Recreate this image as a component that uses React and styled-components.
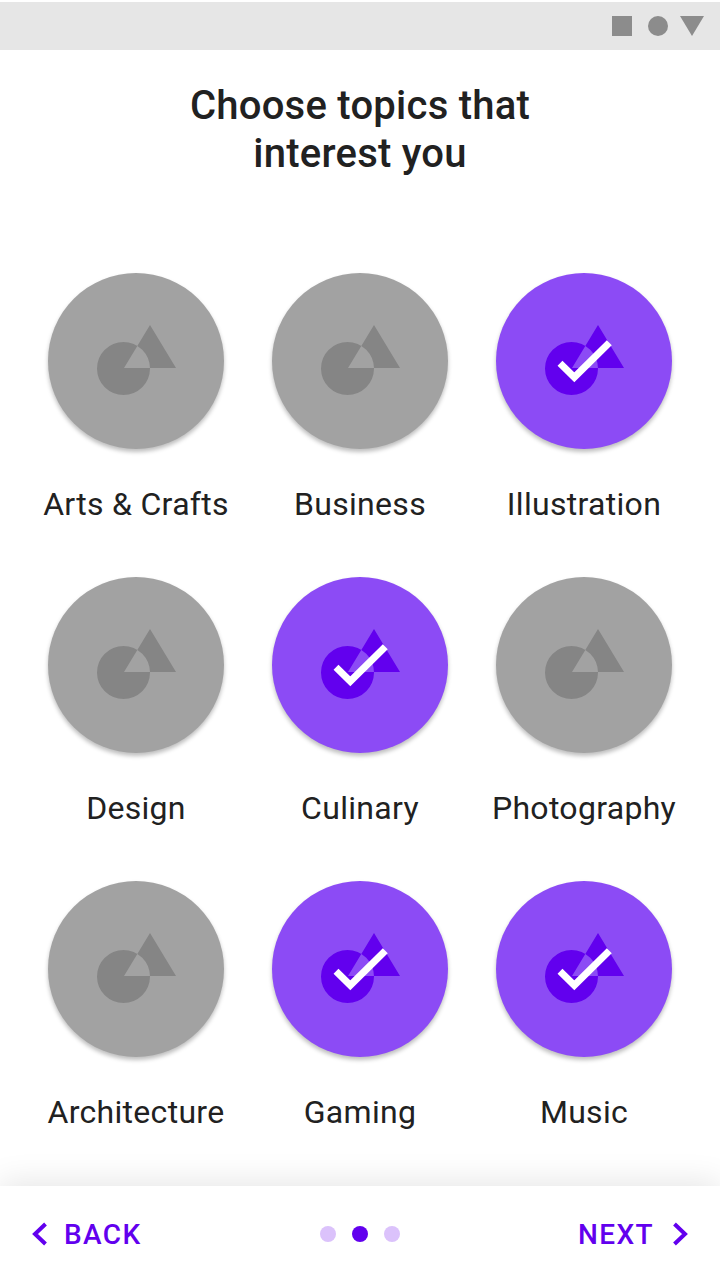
import React from 'react';
import styled, { createGlobalStyle } from 'styled-components';

const GlobalStyle = createGlobalStyle`
  html, body {
    margin: 0;
    padding: 0;
    background: #fff;
  }
  * {
    box-sizing: border-box;
  }
`

const Page = styled.div`
  display: flex;
  flex-direction: column;
  width: 720px;
  height: 1280px;
  padding-top: 2px;
  overflow: hidden;
  font-family: Roboto, sans-serif;
  background: #fff;
`

const StatusBar = styled.div`
  display: flex;
  justify-content: flex-end;
  align-items: center;
  flex-shrink: 0;
  gap: 12px;
  height: 48px;
  padding-right: 16px;
  background: #e6e6e6;
`

const StatusSquare = styled.div`
  width: 20px;
  height: 20px;
  margin-right: 4px;
  background: #8c8c8c;
`

const StatusDot = styled.div`
  width: 20px;
  height: 20px;
  border-radius: 50%;
  background: #8c8c8c;
`

const Title = styled.h1`
  flex-shrink: 0;
  margin: 32px 0 0;
  font-size: 40px;
  font-weight: 500;
  line-height: 48px;
  letter-spacing: 0.25px;
  text-align: center;
  color: #212121;
`

const TopicGrid = styled.div`
  display: grid;
  flex: 1;
  grid-template-columns: repeat(3, 224px);
  grid-auto-rows: 304px;
  align-content: start;
  padding: 95px 24px 0;
`

const Topic = styled.div`
  display: flex;
  flex-direction: column;
  align-items: center;
`

const Badge = styled.div`
  width: 176px;
  height: 176px;
  border-radius: 50%;
  background: ${props => (props.selected ? '#8c4bf5' : '#a2a2a2')};
  box-shadow: 0 3px 4px rgba(0, 0, 0, 0.26);
`

const TopicName = styled.div`
  margin-top: 36px;
  font-size: 32px;
  line-height: 38px;
  letter-spacing: 0.3px;
  white-space: nowrap;
  color: #212121;
`

const Footer = styled.div`
  display: flex;
  justify-content: space-between;
  align-items: center;
  flex-shrink: 0;
  height: 94px;
  padding: 2px 32px 0;
  background: #fff;
  box-shadow: 0 -4px 30px rgba(0, 0, 0, 0.1);
`

const NavButton = styled.div`
  display: flex;
  align-items: center;
  gap: ${props => (props.end ? '18px' : '16px')};
  width: 140px;
  justify-content: ${props => (props.end ? 'flex-end' : 'flex-start')};
  font-size: 28px;
  font-weight: 500;
  letter-spacing: 1.4px;
  color: #6200ee;
`

const Dots = styled.div`
  display: flex;
  gap: 16px;
`

const Dot = styled.div`
  width: 16px;
  height: 16px;
  border-radius: 50%;
  background: ${props => (props.active ? '#6200ee' : '#dbc2fb')};
`

const topics = [
  { name: 'Arts & Crafts' },
  { name: 'Business' },
  { name: 'Illustration', selected: true },
  { name: 'Design' },
  { name: 'Culinary', selected: true },
  { name: 'Photography' },
  { name: 'Architecture' },
  { name: 'Gaming', selected: true },
  { name: 'Music', selected: true },
];

const TopicIcon = ({ selected }) => (
  <svg width="176" height="176" viewBox="0 0 176 176">
    <path
      fill={selected ? '#6200ee' : '#858585'}
      fillRule="evenodd"
      d="M49 95.5a26.5 26.5 0 1 0 53 0a26.5 26.5 0 1 0 -53 0Z M102 52L128 95H76Z"
    />
    {selected && (
      <path d="M64 90.3L78.3 104.3L113.3 69.7" fill="none" stroke="#fff" strokeWidth="7" />
    )}
  </svg>
);

const Chevron = ({ d }) => (
  <svg width="16" height="24" viewBox="0 0 16 24">
    <path d={d} fill="none" stroke="#6200ee" strokeWidth="4" />
  </svg>
);

const App = () => (
  <Page>
    <GlobalStyle />
    <StatusBar>
      <StatusSquare />
      <StatusDot />
      <svg width="24" height="20" viewBox="0 0 24 20">
        <path d="M0 0H24L12 20Z" fill="#8c8c8c" />
      </svg>
    </StatusBar>
    <Title>Choose topics that<br />interest you</Title>
    <TopicGrid>
      {topics.map(topic => (
        <Topic key={topic.name}>
          <Badge selected={topic.selected}>
            <TopicIcon selected={topic.selected} />
          </Badge>
          <TopicName>{topic.name}</TopicName>
        </Topic>
      ))}
    </TopicGrid>
    <Footer>
      <NavButton>
        <Chevron d="M13.5 2L3 12L13.5 22" />
        BACK
      </NavButton>
      <Dots>
        <Dot />
        <Dot active />
        <Dot />
      </Dots>
      <NavButton end>
        NEXT
        <Chevron d="M2.5 2L13 12L2.5 22" />
      </NavButton>
    </Footer>
  </Page>
);

export default App;
